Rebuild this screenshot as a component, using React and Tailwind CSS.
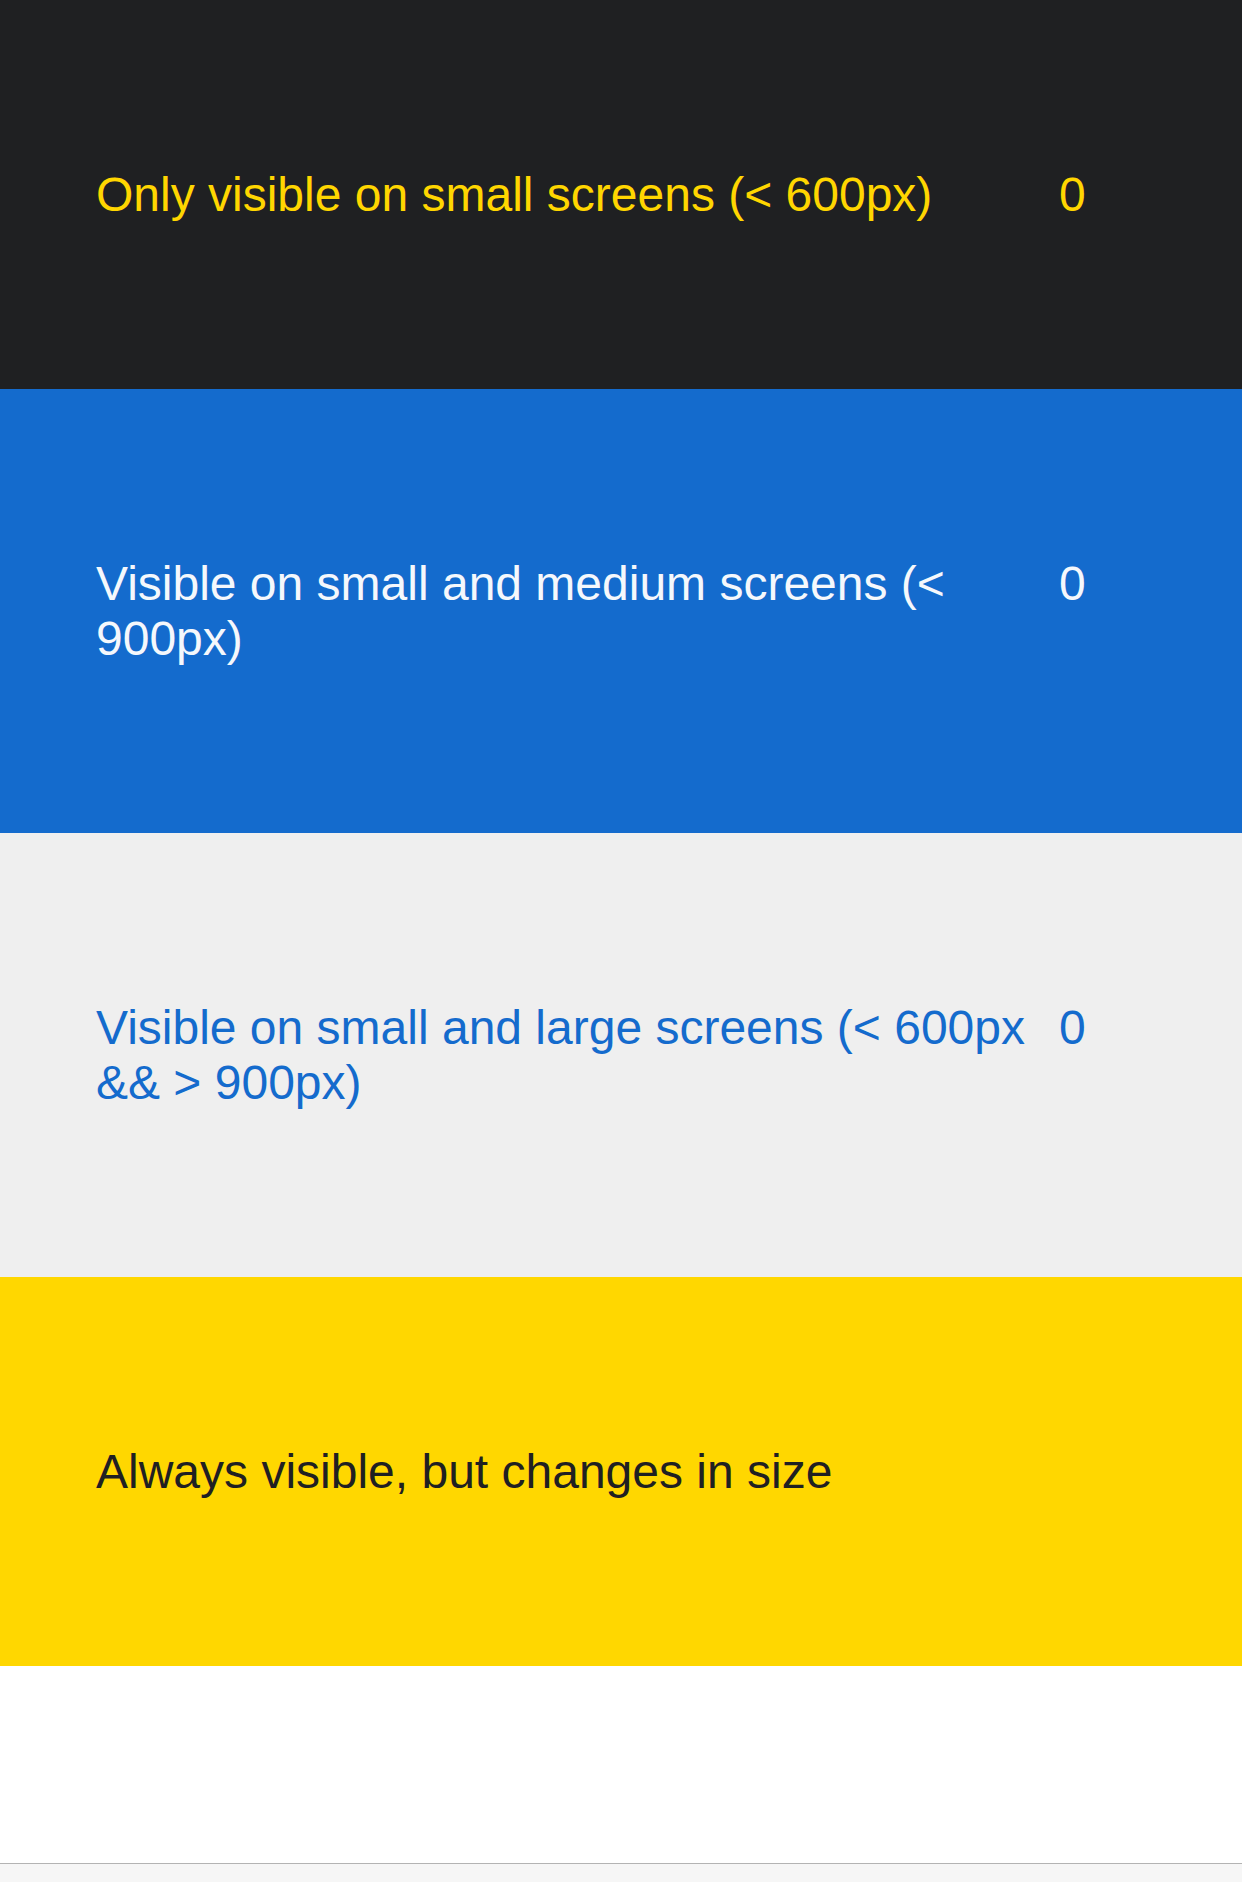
const rows = [
  {
    label: 'Only visible on small screens (< 600px)',
    count: 0,
    box: 'bg-[#1f2022] text-[#ffd600]',
  },
  {
    label: 'Visible on small and medium screens (< 900px)',
    count: 0,
    box: 'bg-[#146bcd] text-[#f5f8fc]',
  },
  {
    label: 'Visible on small and large screens (< 600px && > 900px)',
    count: 0,
    box: 'bg-[#efefef] text-[#146bcd]',
  },
  {
    label: 'Always visible, but changes in size',
    count: null,
    box: 'bg-[#ffd700] text-[#1f2022]',
  },
];

function Row({ label, count, box }) {
  return (
    <section className={`py-[167px] pl-[96px] pr-[96px] ${box}`}>
      <div className="flex items-start gap-6">
        <p className="flex-1 min-w-0">{label}</p>
        {count !== null && <span className="w-[87px] shrink-0">{count}</span>}
      </div>
    </section>
  );
}

export default function App() {
  return (
    <div className="min-h-[1882px] flex flex-col bg-white font-['Liberation_Sans',Arial,sans-serif] text-[48px] leading-[55px]">
      {rows.map(r => (
        <Row key={r.label} {...r} />
      ))}
      <div className="h-[197px]" />
      <div className="flex-1 border-t border-[#b3b3b3] bg-[#f6f6f6]" />
    </div>
  );
}
